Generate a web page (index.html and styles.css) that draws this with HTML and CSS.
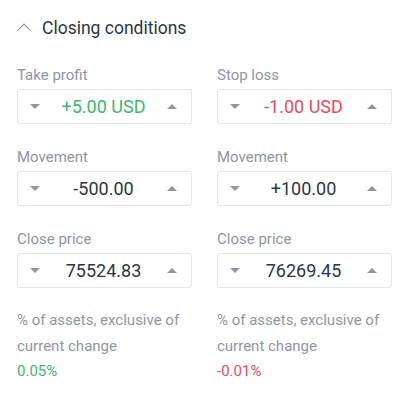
FILE: index.html
```html
<!DOCTYPE html>
<html>
<head>
<meta charset="utf-8">
<link rel="stylesheet" href="styles.css">
</head>
<body>
<div class="panel">
  <div class="header">
    <svg class="chev" width="14" height="8" viewBox="0 0 14 8"><path d="M0.7 7.3 L7 1 L13.3 7.3" fill="none" stroke="#8d96a5" stroke-width="1.2"/></svg>
    <span class="title">Closing conditions</span>
  </div>
  <div class="grid">
    <div class="field">
      <div class="label">Take profit</div>
      <div class="box"><span class="down"></span><span class="val green">+5.00 USD</span><span class="up"></span></div>
    </div>
    <div class="field">
      <div class="label">Stop loss</div>
      <div class="box"><span class="down"></span><span class="val red">-1.00 USD</span><span class="up"></span></div>
    </div>
    <div class="field">
      <div class="label">Movement</div>
      <div class="box"><span class="down"></span><span class="val">-500.00</span><span class="up"></span></div>
    </div>
    <div class="field">
      <div class="label">Movement</div>
      <div class="box"><span class="down"></span><span class="val">+100.00</span><span class="up"></span></div>
    </div>
    <div class="field">
      <div class="label">Close price</div>
      <div class="box"><span class="down"></span><span class="val">75524.83</span><span class="up"></span></div>
    </div>
    <div class="field">
      <div class="label">Close price</div>
      <div class="box"><span class="down"></span><span class="val">76269.45</span><span class="up"></span></div>
    </div>
    <div class="note">
      <div class="note-text">% of assets, exclusive of current change</div>
      <div class="pct green">0.05%</div>
    </div>
    <div class="note">
      <div class="note-text">% of assets, exclusive of current change</div>
      <div class="pct red">-0.01%</div>
    </div>
  </div>
</div>
</body>
</html>
```
FILE: styles.css
```css
html, body {
  margin: 0;
  padding: 0;
  background: #ffffff;
}
body {
  font-family: Roboto, "Liberation Sans", sans-serif;
}
.panel {
  padding: 16px 0 0 17px;
}
.header {
  display: flex;
  align-items: center;
  height: 24px;
  gap: 11px;
}
.chev {
  display: block;
  margin-top: -2px;
}
.title {
  font-size: 17.5px;
  line-height: 24px;
  color: #2c3646;
}
.grid {
  margin-top: 25px;
  display: grid;
  grid-template-columns: 175px 175px;
  column-gap: 25px;
  row-gap: 23px;
}
.label {
  font-size: 15px;
  line-height: 20px;
  color: #8d96a5;
  margin-bottom: 4px;
}
.box {
  box-sizing: border-box;
  height: 35px;
  border: 1px solid #e2e5ea;
  border-radius: 3px;
  display: flex;
  align-items: center;
  justify-content: space-between;
  padding: 0 14px 0 12px;
}
.down, .up {
  width: 0;
  height: 0;
  border-left: 5px solid transparent;
  border-right: 5px solid transparent;
}
.down {
  border-top: 5px solid #8d96a5;
}
.up {
  border-bottom: 5px solid #8d96a5;
}
.val {
  font-size: 18px;
  color: #2c3646;
}
.green {
  color: #3db86c;
}
.red {
  color: #ec4a5c;
}
.note {
  margin-top: -4px;
}
.note-text {
  font-size: 15px;
  line-height: 26px;
  color: #8d96a5;
}
.pct {
  font-size: 15px;
  line-height: 24px;
}
```
